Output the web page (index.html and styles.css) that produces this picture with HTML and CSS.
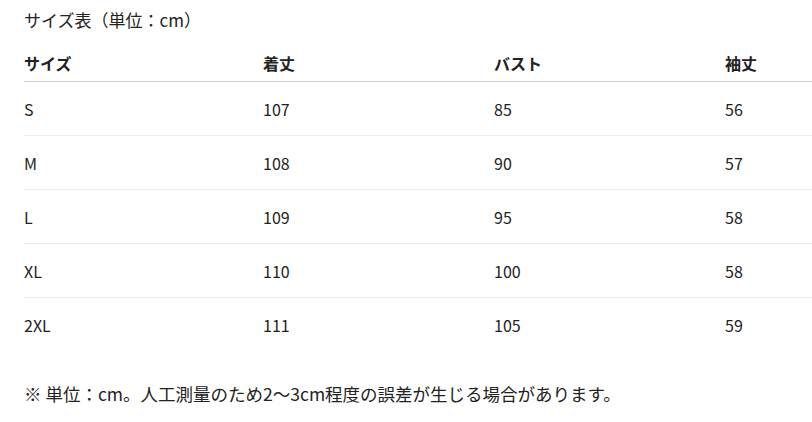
FILE: index.html
```html
<!DOCTYPE html>
<html lang="ja">
<head>
<meta charset="utf-8">
<title>サイズ表</title>
<link rel="stylesheet" href="styles.css">
</head>
<body>
<div class="page">
  <h2 class="title">サイズ表（単位：cm）</h2>
  <table class="size-table">
    <colgroup>
      <col class="c1"><col class="c2"><col class="c3"><col class="c4">
    </colgroup>
    <thead>
      <tr><th>サイズ</th><th>着丈</th><th>バスト</th><th>袖丈</th></tr>
    </thead>
    <tbody>
      <tr><td>S</td><td>107</td><td>85</td><td>56</td></tr>
      <tr><td>M</td><td>108</td><td>90</td><td>57</td></tr>
      <tr><td>L</td><td>109</td><td>95</td><td>58</td></tr>
      <tr><td>XL</td><td>110</td><td>100</td><td>58</td></tr>
      <tr><td>2XL</td><td>111</td><td>105</td><td>59</td></tr>
    </tbody>
  </table>
  <p class="note">※ 単位：cm。人工測量のため2〜3cm程度の誤差が生じる場合があります。</p>
</div>
</body>
</html>
```

FILE: styles.css
```css
html, body {
  margin: 0;
  padding: 0;
  background: #fff;
}
body {
  font-family: "Noto Sans CJK JP", "Noto Sans", sans-serif;
  color: #222;
}
.page {
  padding: 8px 0 0 24px;
}
.title {
  margin: 0;
  font-size: 17px;
  font-weight: 400;
  line-height: 24px;
}
.size-table {
  margin-top: 12px;
  border-collapse: collapse;
  table-layout: fixed;
  width: 100%;
}
.c1 { width: 239px; }
.c2, .c3 { width: 231px; }
.size-table th {
  text-align: left;
  font-size: 16px;
  font-weight: 700;
  height: 37px;
  padding: 0;
  line-height: 24px;
  white-space: nowrap;
  border-bottom: 1px solid #d4d4d4;
  vertical-align: middle;
}
.size-table td {
  font-size: 16px;
  height: 53px;
  padding: 0;
  line-height: 24px;
  white-space: nowrap;
  vertical-align: middle;
  border-bottom: 1px solid #ececec;
}
.size-table tbody tr:last-child td {
  border-bottom: none;
}
.note {
  margin: 31px 0 0;
  font-size: 17.5px;
  line-height: 24px;
}
```
